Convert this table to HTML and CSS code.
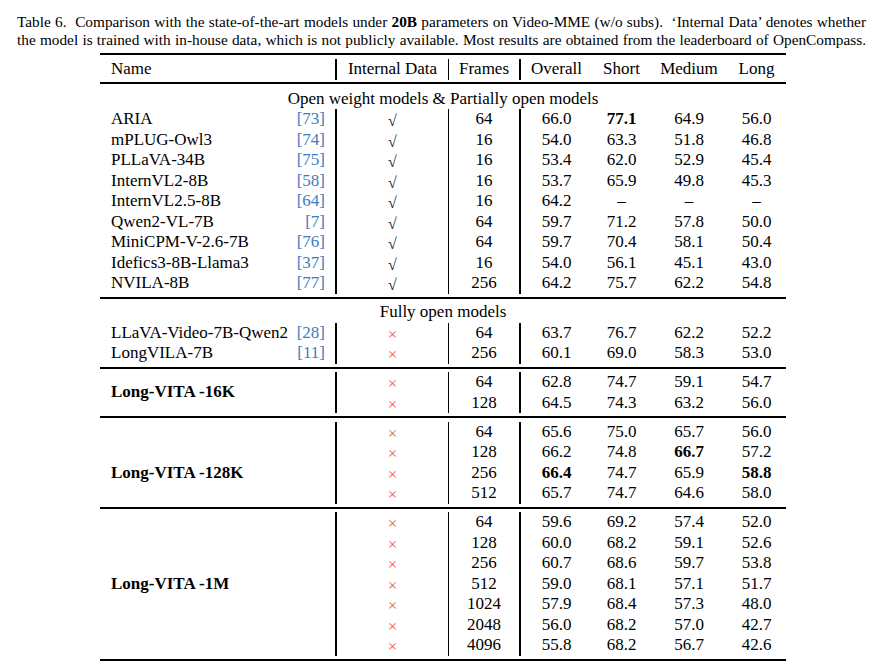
FILE: index.html
```html
<!DOCTYPE html>
<html>
<head>
<meta charset="utf-8">
<link rel="stylesheet" href="styles.css">
</head>
<body>
<div class="caption">
  <div class="cl">Table 6.&nbsp; Comparison with the state-of-the-art models under <b>20B</b> parameters on Video-MME (w/o subs).&nbsp; &lsquo;Internal Data&rsquo; denotes whether</div>
  <div class="cl">the model is trained with in-house data, which is not publicly available. Most results are obtained from the leaderboard of OpenCompass.</div>
</div>
<table class="tbl">
  <colgroup>
    <col class="w-name"><col class="w-int"><col class="w-fr"><col class="w-ov"><col class="w-sh"><col class="w-md"><col class="w-lg">
  </colgroup>
  <tr class="rule"><td colspan="7"><div class="line top"></div></td></tr>
  <tr>
    <td class="c1 l">Name</td><td class="c2">Internal Data</td><td class="c3">Frames</td><td>Overall</td><td>Short</td><td>Medium</td><td>Long</td>
  </tr>
  <tr class="rule"><td colspan="7"><div class="line mid"></div></td></tr>
  <tr><td colspan="7" class="grp">Open weight models &amp; Partially open models</td></tr>
  <tr><td class="c1 l"><div class="nm"><span>ARIA</span><span class="cite">[73]</span></div></td><td class="c2"><span class="ck">&#8730;</span></td><td class="c3">64</td><td>66.0</td><td><b>77.1</b></td><td>64.9</td><td>56.0</td></tr>
  <tr><td class="c1 l"><div class="nm"><span>mPLUG-Owl3</span><span class="cite">[74]</span></div></td><td class="c2"><span class="ck">&#8730;</span></td><td class="c3">16</td><td>54.0</td><td>63.3</td><td>51.8</td><td>46.8</td></tr>
  <tr><td class="c1 l"><div class="nm"><span>PLLaVA-34B</span><span class="cite">[75]</span></div></td><td class="c2"><span class="ck">&#8730;</span></td><td class="c3">16</td><td>53.4</td><td>62.0</td><td>52.9</td><td>45.4</td></tr>
  <tr><td class="c1 l"><div class="nm"><span>InternVL2-8B</span><span class="cite">[58]</span></div></td><td class="c2"><span class="ck">&#8730;</span></td><td class="c3">16</td><td>53.7</td><td>65.9</td><td>49.8</td><td>45.3</td></tr>
  <tr><td class="c1 l"><div class="nm"><span>InternVL2.5-8B</span><span class="cite">[64]</span></div></td><td class="c2"><span class="ck">&#8730;</span></td><td class="c3">16</td><td>64.2</td><td>&ndash;</td><td>&ndash;</td><td>&ndash;</td></tr>
  <tr><td class="c1 l"><div class="nm"><span>Qwen2-VL-7B</span><span class="cite">[7]</span></div></td><td class="c2"><span class="ck">&#8730;</span></td><td class="c3">64</td><td>59.7</td><td>71.2</td><td>57.8</td><td>50.0</td></tr>
  <tr><td class="c1 l"><div class="nm"><span>MiniCPM-V-2.6-7B</span><span class="cite">[76]</span></div></td><td class="c2"><span class="ck">&#8730;</span></td><td class="c3">64</td><td>59.7</td><td>70.4</td><td>58.1</td><td>50.4</td></tr>
  <tr><td class="c1 l"><div class="nm"><span>Idefics3-8B-Llama3</span><span class="cite">[37]</span></div></td><td class="c2"><span class="ck">&#8730;</span></td><td class="c3">16</td><td>54.0</td><td>56.1</td><td>45.1</td><td>43.0</td></tr>
  <tr><td class="c1 l"><div class="nm"><span>NVILA-8B</span><span class="cite">[77]</span></div></td><td class="c2"><span class="ck">&#8730;</span></td><td class="c3">256</td><td>64.2</td><td>75.7</td><td>62.2</td><td>54.8</td></tr>
  <tr class="rule"><td colspan="7"><div class="line"></div></td></tr>
  <tr><td colspan="7" class="grp">Fully open models</td></tr>
  <tr><td class="c1 l"><div class="nm"><span>LLaVA-Video-7B-Qwen2</span><span class="cite">[28]</span></div></td><td class="c2"><span class="x">&times;</span></td><td class="c3">64</td><td>63.7</td><td>76.7</td><td>62.2</td><td>52.2</td></tr>
  <tr><td class="c1 l"><div class="nm"><span>LongVILA-7B</span><span class="cite">[11]</span></div></td><td class="c2"><span class="x">&times;</span></td><td class="c3">256</td><td>60.1</td><td>69.0</td><td>58.3</td><td>53.0</td></tr>
  <tr class="rule"><td colspan="7"><div class="line"></div></td></tr>
  <tr><td class="c1 l lv" rowspan="2">Long-VITA -16K</td><td class="c2"><span class="x">&times;</span></td><td class="c3">64</td><td>62.8</td><td>74.7</td><td>59.1</td><td>54.7</td></tr>
  <tr><td class="c2"><span class="x">&times;</span></td><td class="c3">128</td><td>64.5</td><td>74.3</td><td>63.2</td><td>56.0</td></tr>
  <tr class="rule"><td colspan="7"><div class="line"></div></td></tr>
  <tr><td class="c1 l"></td><td class="c2"><span class="x">&times;</span></td><td class="c3">64</td><td>65.6</td><td>75.0</td><td>65.7</td><td>56.0</td></tr>
  <tr><td class="c1 l"></td><td class="c2"><span class="x">&times;</span></td><td class="c3">128</td><td>66.2</td><td>74.8</td><td><b>66.7</b></td><td>57.2</td></tr>
  <tr><td class="c1 l lv">Long-VITA -128K</td><td class="c2"><span class="x">&times;</span></td><td class="c3">256</td><td><b>66.4</b></td><td>74.7</td><td>65.9</td><td><b>58.8</b></td></tr>
  <tr><td class="c1 l"></td><td class="c2"><span class="x">&times;</span></td><td class="c3">512</td><td>65.7</td><td>74.7</td><td>64.6</td><td>58.0</td></tr>
  <tr class="rule"><td colspan="7"><div class="line"></div></td></tr>
  <tr><td class="c1 l"></td><td class="c2"><span class="x">&times;</span></td><td class="c3">64</td><td>59.6</td><td>69.2</td><td>57.4</td><td>52.0</td></tr>
  <tr><td class="c1 l"></td><td class="c2"><span class="x">&times;</span></td><td class="c3">128</td><td>60.0</td><td>68.2</td><td>59.1</td><td>52.6</td></tr>
  <tr><td class="c1 l"></td><td class="c2"><span class="x">&times;</span></td><td class="c3">256</td><td>60.7</td><td>68.6</td><td>59.7</td><td>53.8</td></tr>
  <tr><td class="c1 l lv">Long-VITA -1M</td><td class="c2"><span class="x">&times;</span></td><td class="c3">512</td><td>59.0</td><td>68.1</td><td>57.1</td><td>51.7</td></tr>
  <tr><td class="c1 l"></td><td class="c2"><span class="x">&times;</span></td><td class="c3">1024</td><td>57.9</td><td>68.4</td><td>57.3</td><td>48.0</td></tr>
  <tr><td class="c1 l"></td><td class="c2"><span class="x">&times;</span></td><td class="c3">2048</td><td>56.0</td><td>68.2</td><td>57.0</td><td>42.7</td></tr>
  <tr><td class="c1 l"></td><td class="c2"><span class="x">&times;</span></td><td class="c3">4096</td><td>55.8</td><td>68.2</td><td>56.7</td><td>42.6</td></tr>
  <tr class="rule"><td colspan="7"><div class="line bottom"></div></td></tr>
</table>
</body>
</html>
```

FILE: styles.css
```css
html, body {
  margin: 0;
  padding: 0;
  background: #fff;
}
body {
  font-family: "Liberation Serif", "Times New Roman", serif;
  color: #000;
}
.caption {
  margin: 13px 0 0 17px;
  width: 849px;
  font-size: 15.3px;
  line-height: 18px;
}
.cl {
  text-align: justify;
  text-align-last: justify;
}
.tbl {
  margin: 4px 0 0 100px;
  border-collapse: separate;
  border-spacing: 0;
  table-layout: fixed;
  width: 686px;
  font-size: 17px;
  line-height: 20.5px;
}
.w-name { width: 237px; }
.w-int { width: 112px; }
.w-fr { width: 72px; }
.w-ov { width: 71px; }
.w-sh { width: 59px; }
.w-md { width: 76px; }
.w-lg { width: 59px; }
.tbl td {
  padding: 0;
  height: 20.5px;
  text-align: center;
  white-space: nowrap;
  vertical-align: middle;
}
.tbl tr.rule td { height: auto; }
.tbl td.l {
  text-align: left;
  padding: 0 10px 0 11px;
}
.tbl td.c1 { border-right: 2px solid #000; }
.tbl td.c2 { border-right: 1px solid #000; }
.tbl td.c3 { border-right: 2px solid #000; }
.rule td { padding: 0; }
.line {
  height: 2px;
  background: #000;
  margin: 3px 0 3.5px;
}
.line.top { margin: 0 0 4px; }
.line.mid { margin: 2.5px 0 4.5px; }
.line.bottom { margin: 3px 0 0; }
.nm {
  display: flex;
  justify-content: space-between;
}
.cite { color: #3f7cc2; }
.ck {
  display: inline-block;
  line-height: 12px;
  vertical-align: middle;
  font-size: 16px;
  color: #222;
  transform: translateY(1px);
}
.x {
  display: inline-block;
  line-height: 12px;
  vertical-align: middle;
  color: #ee5a55;
  font-size: 17px;
  transform: translateY(1px);
}
.lv { font-weight: bold; }
.grp { text-align: center; }
```
